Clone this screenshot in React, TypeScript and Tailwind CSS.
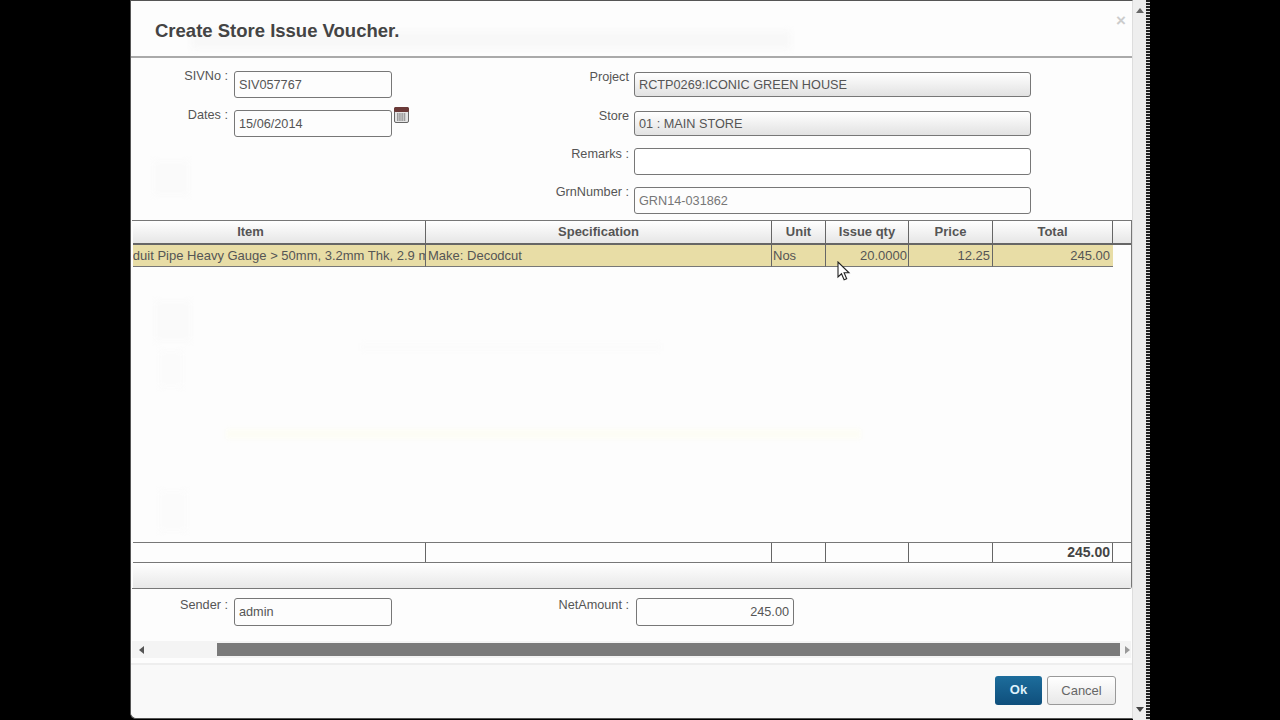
import React from 'react';

const columns = 'grid grid-cols-[293px_346px_54px_83px_84px_120px_18px]';
const cell = 'border-r border-[#666] px-[3px] truncate';
const rowCell = 'border-r border-b border-r-[#666] border-b-[#777] bg-[#e8dda6] overflow-hidden whitespace-nowrap';

function Label({ text, width, className = '' }: { text: string; width: string; className?: string }) {
  return <div className={`${width} text-right text-[12.7px] leading-[14px] text-[#555] whitespace-nowrap shrink-0 ${className}`}>{text}</div>;
}

function Box({ value, className }: { value: string; className: string }) {
  return (
    <div className={`border border-[#777] rounded-[3px] px-[4px] flex items-center shrink-0 text-[12.7px] text-[#555] ${className}`}>
      {value}
    </div>
  );
}

function CalendarIcon() {
  return (
    <svg width="15" height="16" viewBox="0 0 15 16" className="ml-[2px] -mt-[3px] shrink-0">
      <rect x="0.5" y="0.5" width="14" height="15" rx="1.5" fill="#e4e4e4" stroke="#666" />
      <rect x="0" y="0" width="15" height="5" rx="1.5" fill="#6b3a38" />
      <path d="M3 7h9M3 9h9M3 11h9M3 13h9" stroke="#555" strokeWidth="1" strokeDasharray="1.5 0.7" />
    </svg>
  );
}

export default function App() {
  return (
    <div className="flex w-[1280px] h-[720px] overflow-hidden bg-black font-['Liberation_Sans',Arial,sans-serif]">
      <div className="w-[130px] shrink-0" />

      <div className="relative w-[1003px] h-[719px] shrink-0 flex flex-col bg-[#fdfdfd] border border-[#555] border-r-[#ddd] rounded-bl-[6px]">
        {/* what shows through from the page behind the dialog */}
        <div className="absolute left-[22px] top-[160px] w-[36px] h-[34px] bg-[#fafafa] blur-[3px]" />
        <div className="absolute left-[24px] top-[300px] w-[36px] h-[40px] bg-[#fafafa] blur-[3px]" />
        <div className="absolute left-[28px] top-[350px] w-[24px] h-[36px] bg-[#fbfbfb] blur-[3px]" />
        <div className="absolute left-[28px] top-[490px] w-[28px] h-[40px] bg-[#fbfbfb] blur-[3px]" />
        <div className="absolute left-[95px] top-[428px] w-[635px] h-[10px] bg-[#fdfdf5] blur-[2px]" />
        <div className="absolute left-[230px] top-[342px] w-[300px] h-[8px] bg-[#fbfbfb] blur-[2px]" />
        <div className="absolute left-[60px] top-[30px] w-[600px] h-[18px] bg-[#f8f8f8] blur-[3px]" />

        <div className="relative h-[57px] shrink-0 border-b-2 border-[#aaa] flex items-start">
          <h1 className="ml-[24px] mt-[20px] text-[18.5px] leading-[20px] font-bold text-[#444]">Create Store Issue Voucher.</h1>
          <span className="absolute right-[6px] top-[11px] text-[17px] leading-[18px] font-bold text-[#ccc]">×</span>
        </div>

        <div className="relative h-[162px] shrink-0 flex">
          <div className="w-[263px] shrink-0 pl-[1px] pt-[13px] flex flex-col gap-[12px]">
            <div className="flex items-start gap-[6px]">
              <Label text="SIVNo :" width="w-[96px]" className="-mt-[2px]" />
              <Box value="SIV057767" className="w-[158px] h-[27px] pt-[2px]" />
            </div>
            <div className="flex items-start gap-[6px]">
              <Label text="Dates :" width="w-[96px]" className="-mt-[2px]" />
              <Box value="15/06/2014" className="w-[158px] h-[27px] pt-[2px]" />
              <div className="-ml-[6px]"><CalendarIcon /></div>
            </div>
          </div>
          <div className="ml-[119px] pt-[14px] flex flex-col">
            <div className="flex items-start gap-[5px]">
              <Label text="Project" width="w-[116px]" className="-mt-[2px]" />
              <Box value="RCTP0269:ICONIC GREEN HOUSE" className="w-[397px] h-[25px] pt-[2px] bg-gradient-to-b from-white to-[#e2e2e2]" />
            </div>
            <div className="flex items-start gap-[5px] mt-[14px]">
              <Label text="Store" width="w-[116px]" className="-mt-[2px]" />
              <Box value="01 : MAIN STORE" className="w-[397px] h-[25px] pt-[2px] bg-gradient-to-b from-white to-[#e2e2e2]" />
            </div>
            <div className="flex items-start gap-[5px] mt-[12px]">
              <Label text="Remarks :" width="w-[116px]" className="-mt-[1px]" />
              <Box value="" className="w-[397px] h-[27px] bg-white" />
            </div>
            <div className="flex items-start gap-[5px] mt-[12px]">
              <Label text="GrnNumber :" width="w-[116px]" className="-mt-[2px]" />
              <Box value="GRN14-031862" className="w-[397px] h-[27px] pt-[2px] text-[#777]" />
            </div>
          </div>
        </div>

        <div className="relative ml-[1px] pl-[1px] w-[1000px] h-[369px] shrink-0 flex flex-col border-t border-r border-b border-[#777] rounded-br-[3px]">
          <div className={`${columns} h-[24px] shrink-0 bg-gradient-to-b from-white to-[#e6e6e6] border-b-2 border-[#666] text-[13px] font-bold text-[#555] text-center leading-[21px]`}>
            <div className="border-r border-[#666] pr-[57px]">Item</div>
            <div className={cell}>Specification</div>
            <div className={cell}>Unit</div>
            <div className={cell}>Issue qty</div>
            <div className={cell}>Price</div>
            <div className={cell}>Total</div>
            <div />
          </div>
          <div className={`${columns} h-[22px] shrink-0 text-[13px] text-[#555] leading-[21px]`}>
            <div className={rowCell}>
              <span className="block -ml-[24px]">Conduit Pipe Heavy Gauge &gt; 50mm, 3.2mm Thk, 2.9 mm</span>
            </div>
            <div className={`${rowCell} px-[2px]`}>Make: Decodcut</div>
            <div className={`${rowCell} px-[1px]`}>Nos</div>
            <div className={`${rowCell} px-[1px] text-right`}>20.0000</div>
            <div className={`${rowCell} px-[2px] text-right`}>12.25</div>
            <div className="pr-[3px] border-b border-[#777] bg-[#e8dda6] text-right">245.00</div>
            <div />
          </div>
          <div className="flex-1" />
          <div className={`${columns} h-[21px] shrink-0 border-t border-b border-[#777] text-[14px] leading-[19px] text-[#444]`}>
            <div className="border-r border-[#666]" />
            <div className="border-r border-[#666]" />
            <div className="border-r border-[#666]" />
            <div className="border-r border-[#666]" />
            <div className="border-r border-[#666]" />
            <div className="border-r border-[#666] px-[2px] text-right font-bold">245.00</div>
            <div />
          </div>
          <div className="h-[25px] shrink-0 bg-gradient-to-b from-white to-[#e8e8e8]" />
        </div>

        <div className="relative h-[52px] shrink-0 flex items-start pt-[9px] pl-[1px]">
          <Label text="Sender :" width="w-[96px]" />
          <Box value="admin" className="ml-[6px] w-[158px] h-[28px] pt-[2px]" />
          <Label text="NetAmount :" width="w-[237px]" />
          <Box value="245.00" className="ml-[7px] w-[158px] h-[28px] pt-[2px] justify-end" />
        </div>

        <div className="relative h-[17px] shrink-0 flex items-center bg-[#f4f4f4] ml-[1px] mr-[1px]">
          <span className="w-[85px] pl-[7px] flex items-center shrink-0">
            <svg width="5" height="8" viewBox="0 0 5 8"><path d="M5 0v8L0 4z" fill="#555" /></svg>
          </span>
          <div className="w-[903px] h-[13px] shrink-0 bg-[#7a7a7a]" />
          <span className="pl-[5px] flex items-center shrink-0">
            <svg width="5" height="8" viewBox="0 0 5 8"><path d="M0 0v8l5-4z" fill="#999" /></svg>
          </span>
        </div>

        <div className="relative mt-[5px] flex-1 border-t-2 border-[#eee] bg-[#f9f9f9] flex justify-end items-start gap-[5px] pt-[11px] pr-[16px] text-[13px] rounded-bl-[6px]">
          <button className="w-[47px] h-[29px] pb-[1px] rounded-[3px] bg-gradient-to-b from-[#1d6d9c] to-[#0f4f7c] text-[#dff2fb] font-bold">Ok</button>
          <button className="w-[69px] h-[29px] rounded-[3px] border border-[#999] bg-gradient-to-b from-white to-[#e8e8e8] text-[#666]">Cancel</button>
        </div>

        <svg width="14" height="20" viewBox="0 0 14 20" className="absolute left-[706px] top-[260px]">
          <path d="M1 1v15l3.5-3.2 2.6 6 2.6-1.1-2.6-5.9H12z" fill="#fff" stroke="#222" strokeWidth="1.1" />
        </svg>
      </div>

      <div className="w-[13px] h-[720px] shrink-0 bg-[#eeeeee] flex flex-col items-center justify-between py-[8px]">
        <svg width="8" height="5" viewBox="0 0 8 5"><path d="M0 5h8L4 0z" fill="#666" /></svg>
        <svg width="8" height="5" viewBox="0 0 8 5"><path d="M0 0h8L4 5z" fill="#444" /></svg>
      </div>
      <div className="w-[4px] h-[720px] shrink-0 bg-[repeating-linear-gradient(to_bottom,#222_0px,#222_2px,#ddd_2px,#ddd_3px)]" />
    </div>
  );
}
